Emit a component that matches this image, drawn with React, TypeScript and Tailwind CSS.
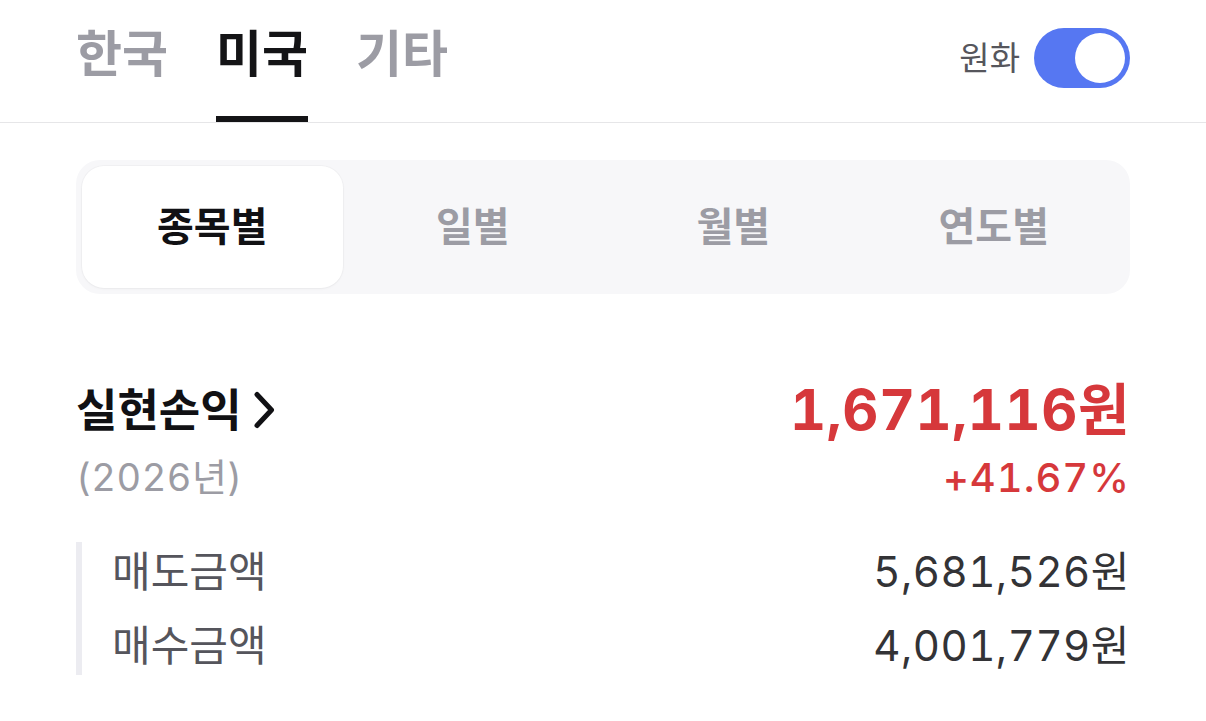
import React from "react";

const FONT = 'Inter, "Noto Sans CJK KR", "Noto Sans", sans-serif';

function Chevron() {
  return (
    <svg width="22" height="38" viewBox="0 0 22 38" fill="none" className="ml-[11px]">
      <path d="M4 3.5 L18.5 19 L4 34.5" stroke="#111114" strokeWidth="5" strokeLinecap="round" strokeLinejoin="round" />
    </svg>
  );
}

export default function App() {
  const regions = ["한국", "미국", "기타"];
  const periods = ["종목별", "일별", "월별", "연도별"];
  return (
    <div
      className="w-[1206px] h-[721px] bg-white overflow-hidden [font-variant-numeric:tabular-nums]"
      style={{ fontFamily: FONT }}
    >
      {/* region tabs + currency toggle */}
      <header className="h-[123px] border-b border-[#e6e6e8] px-[76px] flex items-stretch justify-between">
        <div className="flex gap-[48px] items-stretch">
          {regions.map((r, i) => (
            <div key={r} className="flex flex-col justify-end">
              <div
                className={`text-[50px] font-bold leading-none pb-[37px] ${
                  i === 1 ? "text-[#141416]" : "text-[#9c9ca4]"
                }`}
              >
                {r}
              </div>
              <div className={`h-[6px] ${i === 1 ? "bg-[#141416]" : "bg-transparent"}`} />
            </div>
          ))}
        </div>
        <div className="flex items-center gap-[14px] pb-[6px]">
          <span className="text-[33px] text-[#56565c] leading-none">원화</span>
          <div className="w-[96px] h-[60px] rounded-full bg-[#5677f2] flex items-center justify-end pr-[5px]">
            <div className="w-[50px] h-[50px] rounded-full bg-white" />
          </div>
        </div>
      </header>

      <main className="px-[76px]">
        {/* period segmented control */}
        <div className="mt-[37px] h-[134px] rounded-[24px] bg-[#f7f7f9] p-[6px] grid grid-cols-4">
          {periods.map((p, i) => (
            <div
              key={p}
              className={`flex items-center justify-center rounded-[22px] text-[40px] font-bold leading-none ${
                i === 0
                  ? "bg-white text-[#111114] shadow-[0_0_0_1px_rgba(0,0,0,0.025),0_1px_3px_rgba(0,0,0,0.035)]"
                  : "text-[#9c9ca4]"
              }`}
            >
              {p}
            </div>
          ))}
        </div>

        {/* realized profit summary */}
        <section className="mt-[90px] flex justify-between items-start">
          <div className="flex flex-col">
            <div className="flex items-center h-[52px]">
              <span className="text-[45px] font-bold text-[#111114] leading-none">실현손익</span>
              <Chevron />
            </div>
            <span className="mt-[22px] text-[38px] text-[#9c9ca4] leading-none tracking-[0.5px]">(2026년)</span>
          </div>
          <div className="flex flex-col items-end">
            <div className="h-[52px] flex items-center text-[56px] font-bold text-[#d6383b] leading-none tracking-[0.5px]">
              1,671,116원
            </div>
            <div className="mt-[22px] text-[40px] font-medium text-[#d6383b] leading-none tracking-[1px]">
              +41.67%
            </div>
          </div>
        </section>

        {/* sell / buy breakdown */}
        <div className="mt-[44px] border-l-[6px] border-[#ececf1] pl-[30px] flex flex-col gap-[15px]">
          {[
            ["매도금액", "5,681,526원"],
            ["매수금액", "4,001,779원"],
          ].map(([k, v]) => (
            <div key={k} className="h-[59px] flex items-center justify-between">
              <span className="text-[42px] text-[#55555c] leading-none">{k}</span>
              <span className="text-[42px] text-[#333336] leading-none tracking-[0.5px]">{v}</span>
            </div>
          ))}
        </div>
      </main>
    </div>
  );
}
